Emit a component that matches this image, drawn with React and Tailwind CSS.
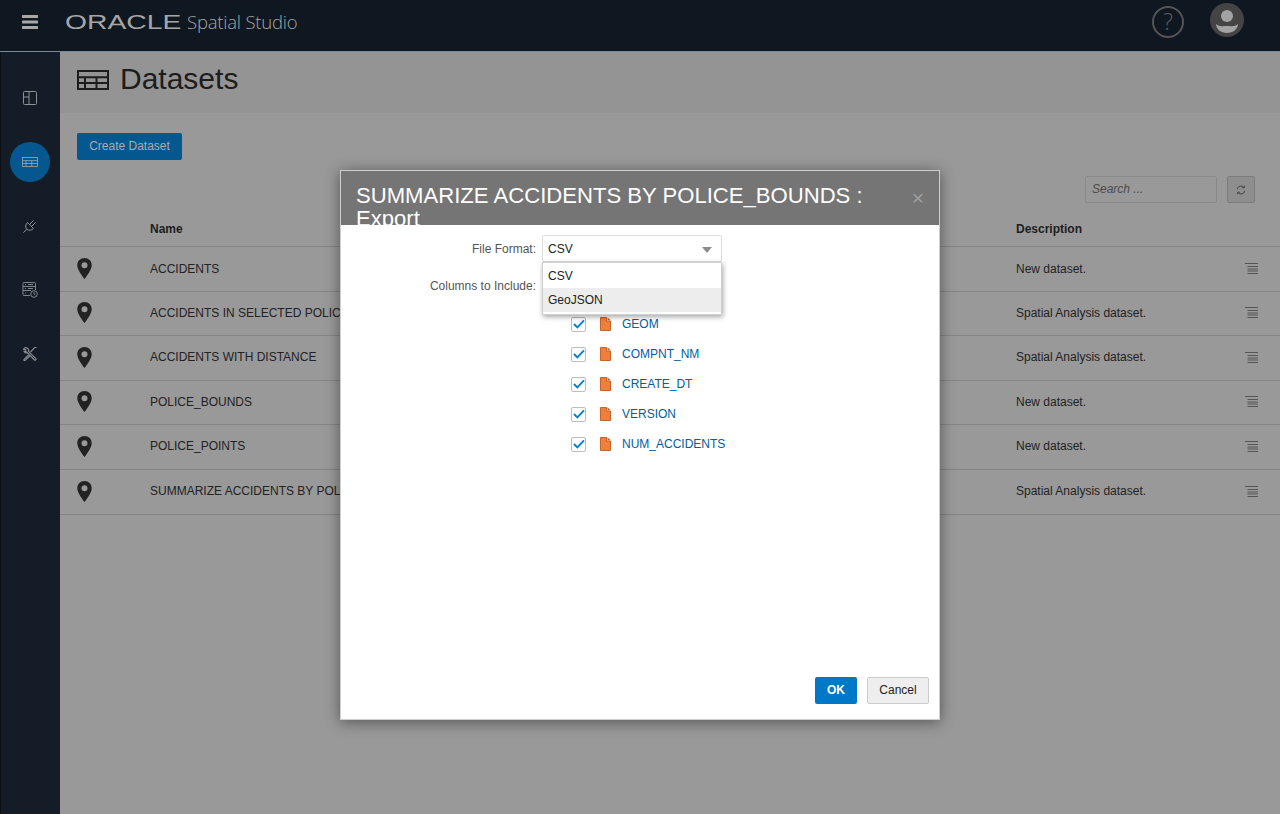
import React from "react";

const rows = [
  { name: "ACCIDENTS", desc: "New dataset.", h: "h-[45px] [&>.cell]:pb-[1px]" },
  { name: "ACCIDENTS IN SELECTED POLICE_BOUNDS", desc: "Spatial Analysis dataset.", h: "h-[44px] [&>.cell]:pb-[1px]" },
  { name: "ACCIDENTS WITH DISTANCE", desc: "Spatial Analysis dataset.", h: "h-[45px] [&>.cell]:pb-[2px]" },
  { name: "POLICE_BOUNDS", desc: "New dataset.", h: "h-[44px] [&>.cell]:pb-[1px]" },
  { name: "POLICE_POINTS", desc: "New dataset.", h: "h-[45px] [&>.cell]:pb-[2px]" },
  { name: "SUMMARIZE ACCIDENTS BY POLICE_BOUNDS", desc: "Spatial Analysis dataset.", h: "h-[45px] [&>.cell]:pb-[2px]" },
];

const columns = ["GEOM", "COMPNT_NM", "CREATE_DT", "VERSION", "NUM_ACCIDENTS"];

function TableIcon({ className, stroke = "currentColor", strokeWidth = 1 }) {
  return (
    <svg viewBox="0 0 32 20" className={className} fill="none" stroke={stroke} strokeWidth={strokeWidth}>
      <rect x="1" y="1" width="30" height="18" />
      <path d="M1 7.300h30M1 13h30M8 7v12M19.500 7v12" />
    </svg>
  );
}

function Pin() {
  return (
    <svg viewBox="0 0 15 21" className="w-[15px] h-[21px]">
      <path
        fillRule="evenodd"
        fill="#222222"
        d="M7.500 0C3.400 0 .3 3.100.3 7.200c0 4.200 4.600 10.400 7.200 13.800 2.600-3.400 7.200-9.600 7.200-13.800C14.700 3.100 11.600 0 7.500 0zm0 4.300a3 3 0 1 1 0 6 3 3 0 0 1 0-6z"
      />
    </svg>
  );
}

function RowMenu() {
  return (
    <svg viewBox="0 0 13 11" className="w-[13px] h-[11px]" stroke="#555555" strokeWidth="1">
      <path d="M0 .5h13M2.500 3.500h10.500M2.500 6h10.500M2.500 8h10.500M2.500 10.500h10.500" />
    </svg>
  );
}

function FileIcon() {
  return (
    <svg viewBox="0 0 11 14" className="w-[11px] h-[14px]">
      <path d="M.5.5h6v3.500h4v9.500H.5z" fill="#ef7f3a" stroke="#c6622a" />
      <path d="M7.500.3l3.200 3H7.500z" fill="#c6622a" />
    </svg>
  );
}

function Checkbox() {
  return (
    <span className="w-[15px] h-[15px] flex items-center justify-center bg-white border border-[#bdbdbd] rounded-[2px]">
      <svg viewBox="0 0 13 11" className="w-[12px] h-[10px]" fill="none" stroke="#0a80cc" strokeWidth="2.200">
        <path d="M1 5.500l3.700 3.700L12 1.500" />
      </svg>
    </span>
  );
}

function SideIcon({ children }) {
  return <div className="h-[64px] w-full flex items-center justify-center text-[#8d9195]">{children}</div>;
}

export default function App() {
  return (
    <div className="relative w-[1280px] h-[814px] overflow-hidden flex flex-col bg-[#999999] text-[12px] text-[#222222] font-['Liberation_Sans',Arial,sans-serif]">
      <header className="h-[52px] shrink-0 flex items-center pb-[8px] bg-[#0f1720] border-b border-[#7b8b99] text-[#a6a6a6]">
        <svg viewBox="0 0 16 14" className="ml-[22px] w-[16px] h-[14px]" fill="#a8a8a8">
          <rect width="16" height="3" rx="0.5" />
          <rect y="5.500" width="16" height="3" rx="0.5" />
          <rect y="11" width="16" height="3" rx="0.5" />
        </svg>
        <div className="ml-[27px] w-[122px] h-[24px]">
          <span className="inline-block origin-left scale-x-[1.38] text-[20.500px] leading-[24px] text-[#a6a6a6]">ORACLE</span>
        </div>
        <span className="font-['Open_Sans',sans-serif] font-light text-[18.500px] leading-[24px] text-[#a6a6a6] tracking-[-0.2px]">Spatial Studio</span>
        <div className="ml-auto flex items-center gap-[26px] pr-[36px]">
          <div className="w-[32px] h-[32px] rounded-full border-2 border-[#555555] flex items-center justify-center text-[23px] font-light text-[#5f5f5f] font-['Open_Sans',sans-serif]">?</div>
          <svg viewBox="0 0 34 34" className="w-[34px] h-[34px] -mt-[3px]">
            <circle cx="17" cy="17" r="17" fill="#444444" />
            <circle cx="17" cy="13" r="6" fill="#a3a3a3" />
            <path d="M6 21c3 3 7 2 11 2s8 1 11-2c0 5-5 9-11 9S6 26 6 21z" fill="#a3a3a3" />
          </svg>
        </div>
      </header>

      <div className="flex-1 flex min-h-0">
        <aside className="w-[60px] shrink-0 bg-[#141c27] border-l border-[#0c1118] pr-[1px] flex flex-col items-center pt-[14px]">
          <SideIcon>
            <svg viewBox="0 0 14 14" className="w-[14px] h-[14px]" fill="none" stroke="currentColor">
              <rect x="0.5" y="0.5" width="13" height="13" rx="1" />
              <path d="M6 .5v13M.5 6H6" />
            </svg>
          </SideIcon>
          <div className="h-[64px] w-full flex items-center justify-center">
            <div className="w-[40px] h-[40px] rounded-full bg-[#05588f] flex items-center justify-center">
              <TableIcon className="w-[16px] h-[10px]" stroke="#9aa9b5" strokeWidth={1.6} />
            </div>
          </div>
          <SideIcon>
            <svg viewBox="0 0 14 14" className="w-[14px] h-[14px]" fill="none" stroke="currentColor">
              <path d="M.3 13.700l3.400-3.400M4.500 3.500l6 6c-1.800 2-4.800 2.300-6.800.8C2 8.500 2.500 5.500 4.500 3.500zM6.500 5.500L10.500 1.500M8.500 7.500l4-4" />
            </svg>
          </SideIcon>
          <SideIcon>
            <svg viewBox="0 0 16 16" className="w-[16px] h-[16px]" fill="none" stroke="currentColor" strokeWidth="0.9">
              <path d="M8 13.500H1.500a1 1 0 0 1-.5-1V1.500a1 1 0 0 1 1-1h10.500a1 1 0 0 1 1 1V8M1 4.500h12.500M1 8.500h8M3 2.500h1M6 2.500h5M3 6.500h1M6 6.500h5M3 11h1" />
              <circle cx="12" cy="12" r="3.300" />
              <path d="M12 10.200V12l1.200 1" />
            </svg>
          </SideIcon>
          <SideIcon>
            <svg viewBox="0 0 14 14" className="w-[14px] h-[14px]" fill="none" stroke="currentColor" strokeWidth="1.100">
              <path d="M4.500 1.200C3 .2 1 .7.500 2.300L2.500 2.800 3 4.500 1 4.300C1.500 5.800 3 6.200 4.200 5.600L11.500 13c.7.700 2.100-.7 1.400-1.400L5.400 4.300c.5-1 .1-2.300-.9-3.100z" />
              <path d="M13.500.5L12 .2 7.500 5M5.500 8L1.100 12.300c-.7.800.3 1.700 1 1L6.800 9" />
            </svg>
          </SideIcon>
        </aside>

        <main className="flex-1 min-w-0">
          <div className="h-[61px] bg-[#949494] flex items-center pl-[17px] gap-[11px] pb-[5px]">
            <TableIcon className="w-[32px] h-[20px]" stroke="#1c1c1c" strokeWidth={2} />
            <h1 className="text-[30px] leading-[36px] mb-[2px] text-[#1c1c1c]">Datasets</h1>
          </div>
          <div className="pl-[17px] pt-[20px]">
            <button className="w-[105px] h-[27px] pb-[1px] rounded-[2px] bg-[#05588f] text-[#a6acb2] font-medium">Create Dataset</button>
          </div>
          <div className="flex justify-end gap-[10px] pt-[16px] pr-[25px]">
            <div className="w-[132px] h-[27px] pb-[1px] border border-[#8a8a8a] rounded-[2px] flex items-center pl-[6px] italic text-[#4c4c4c]">Search ...</div>
            <div className="w-[28px] h-[27px] border border-[#7d7d7d] rounded-[2px] bg-[#8e8e8e] flex items-center justify-center">
              <svg viewBox="0 0 12 12" className="w-[10px] h-[10px]" fill="none" stroke="#444444" strokeWidth="1.200">
                <path d="M1.500 5a4.500 4.500 0 0 1 8-2M10.500 7a4.500 4.500 0 0 1-8 2M10 .8v2.500H7.500M2 11.200V8.700h2.500" />
              </svg>
            </div>
          </div>

          <div className="h-[44px] flex items-center pt-[8px] border-b border-[#858585] font-bold text-[#1e1e1e]">
            <div className="w-[90px]" />
            <div className="w-[866px]">Name</div>
            <div>Description</div>
          </div>
          {rows.map((row) => (
            <div key={row.name} className={`${row.h} flex items-center border-b border-[#858585]`}>
              <div className="w-[90px] pl-[17px] flex -mt-[2px]"><Pin /></div>
              <div className="cell w-[866px] whitespace-nowrap">{row.name}</div>
              <div className="cell flex-1">{row.desc}</div>
              <div className="pr-[22px] -mt-[2px]"><RowMenu /></div>
            </div>
          ))}
        </main>
      </div>

      {/* export dialog */}
      <div className="absolute left-[340px] top-[170px] w-[600px] h-[550px] flex flex-col bg-white border border-[#cfcfcf] shadow-[0_2px_14px_rgba(0,0,0,0.45)]">
        <div className="relative h-[54px] shrink-0 overflow-hidden bg-[#757575] pl-[15px] pr-[60px] pt-[13px] text-white text-[22.100px] leading-[23px]">
          SUMMARIZE ACCIDENTS BY POLICE_BOUNDS : Export
          <span className="absolute right-[15px] top-[13px] text-[21px] leading-[28px] text-[#a0a0a0]">×</span>
        </div>

        <div className="flex-1 min-h-0 pt-[10px]">
          <div className="flex items-center">
            <label className="w-[195px] text-right text-[#555555]">File Format:</label>
            <div className="relative ml-[6px] w-[180px] h-[27px] border border-[#dcdcdc] rounded-[2px] flex items-center pl-[5px] text-[#222222]">
              CSV
              <span className="absolute right-[9px] top-[11px] w-0 h-0 border-x-[5px] border-x-transparent border-t-[6px] border-t-[#8c8c8c]" />
              <div className="absolute left-[-1px] top-[26px] w-[180px] h-[53px] bg-white border border-[#d0d0d0] shadow-[1px_2px_5px_rgba(0,0,0,0.35)] z-10">
                <div className="h-[25px] flex items-center pl-[5px]">CSV</div>
                <div className="h-[24px] pb-[1px] flex items-center pl-[5px] bg-[#ededed]">GeoJSON</div>
              </div>
            </div>
          </div>
          <div className="flex mt-[15px]">
            <label className="w-[195px] h-[18px] leading-[18px] text-right text-[#555555]">Columns to Include:</label>
            <div className="ml-[35px] pt-[32px]">
              {columns.map((col) => (
                <div key={col} className="h-[30px] flex items-center">
                  <Checkbox />
                  <span className="ml-[14px]"><FileIcon /></span>
                  <span className="ml-[11px] text-[#00609f]">{col}</span>
                </div>
              ))}
            </div>
          </div>
        </div>

        <div className="flex justify-end gap-[10px] pr-[10px] pb-[15px]">
          <button className="w-[42px] h-[27px] pb-[1px] rounded-[2px] bg-[#0078c8] text-white font-bold">OK</button>
          <button className="w-[62px] h-[27px] pb-[1px] rounded-[2px] bg-[#eeeeee] border border-[#cccccc] text-[#222222]">Cancel</button>
        </div>
      </div>
    </div>
  );
}
